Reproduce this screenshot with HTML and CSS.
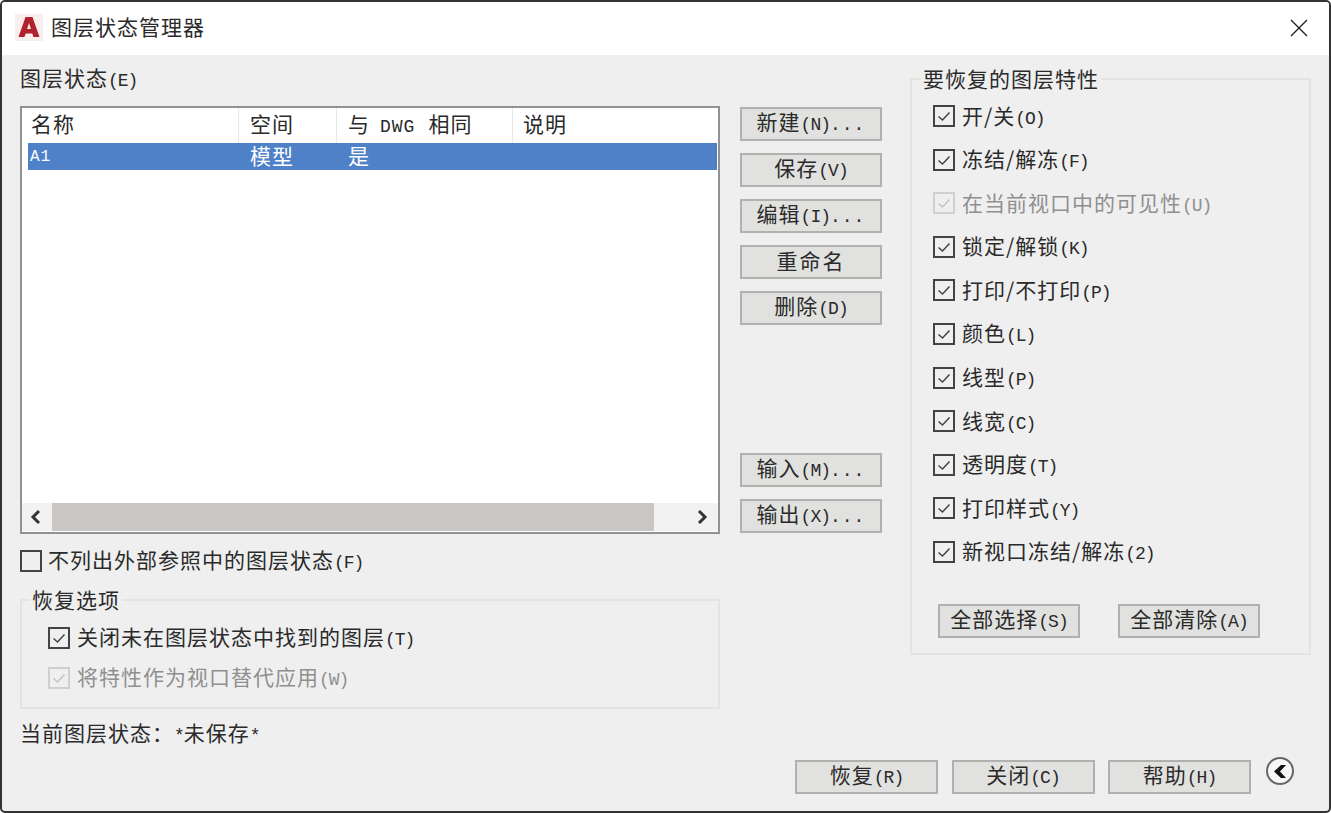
FILE: index.html
```html
<!DOCTYPE html>
<html lang="zh-CN">
<head>
<meta charset="utf-8">
<title>图层状态管理器</title>
<link rel="stylesheet" href="styles.css">
</head>
<body>
<svg class="defs" width="0" height="0" aria-hidden="true">
  <symbol id="tick" viewBox="0 0 18 18"><path d="M3.5 9.5 L7.5 13 L14.5 5.5" fill="none" stroke="currentColor" stroke-width="1.5"/></symbol>
</svg>
<div class="dialog">
  <header class="titlebar">
    <svg class="logo" width="28" height="27" viewBox="0 0 28 27">
      <rect width="28" height="27" fill="#f9eeee"/>
      <path fill-rule="evenodd" d="M10.5 3 H17.5 L24.5 23 H18.5 L17.3 19.5 H10.7 L9.5 23 H3.5 Z M14 9 L12 15 H16 Z" fill="#b0222c"/>
    </svg>
    <span class="title">图层状态管理器</span>
    <svg class="close" width="18" height="18" viewBox="0 0 18 18"><path d="M1 1 L17 17 M17 1 L1 17" stroke="#222" stroke-width="1.4" fill="none"/></svg>
  </header>

  <div class="main">
    <section class="left">
      <div class="label">图层状态<span class="key">(E)</span></div>
      <div class="listbox">
        <div class="list-head">
          <span class="hcell first">名称</span>
          <span class="hcell">空间</span>
          <span class="hcell"><span class="gapr">与</span><span class="key dwg">DWG</span><span class="gapl">相同</span></span>
          <span class="hcell last">说明</span>
        </div>
        <div class="list-row">
          <span class="name">A1</span>
          <span class="cell">模型</span>
          <span class="cell">是</span>
          <span class="cell"></span>
        </div>
        <div class="list-space"></div>
        <div class="hscroll">
          <svg class="arrow" width="13" height="16" viewBox="0 0 13 16"><path d="M10 2 L4 8 L10 14" fill="none" stroke="#333" stroke-width="3"/></svg>
          <div class="thumb"></div>
          <div></div>
          <svg class="arrow" width="13" height="16" viewBox="0 0 13 16"><path d="M3 2 L9 8 L3 14" fill="none" stroke="#333" stroke-width="3"/></svg>
        </div>
      </div>

      <div class="row xref">
        <span class="check"></span>
        <span>不列出外部参照中的图层状态<span class="key">(F)</span></span>
      </div>

      <fieldset class="group restore">
        <legend>恢复选项</legend>
        <div class="restore-list">
          <div class="row">
            <span class="check"><svg><use href="#tick"/></svg></span>
            <span>关闭未在图层状态中找到的图层<span class="key">(T)</span></span>
          </div>
          <div class="row disabled">
            <span class="check"><svg><use href="#tick"/></svg></span>
            <span>将特性作为视口替代应用<span class="key">(W)</span></span>
          </div>
        </div>
      </fieldset>

      <div class="current">当前图层状态：<span class="key">*</span>未保存<span class="key">*</span></div>
    </section>

    <section class="actions">
      <button class="btn">新建<span class="key">(N)</span><span class="dots">...</span></button>
      <button class="btn">保存<span class="key">(V)</span></button>
      <button class="btn">编辑<span class="key">(I)</span><span class="dots">...</span></button>
      <button class="btn spaced">重命名</button>
      <button class="btn">删除<span class="key">(D)</span></button>
      <button class="btn push">输入<span class="key">(M)</span><span class="dots">...</span></button>
      <button class="btn">输出<span class="key">(X)</span><span class="dots">...</span></button>
    </section>

    <fieldset class="group props">
      <legend>要恢复的图层特性</legend>
      <div class="props-list">
        <div class="row"><span class="check"><svg><use href="#tick"/></svg></span><span>开/关<span class="key">(O)</span></span></div>
        <div class="row"><span class="check"><svg><use href="#tick"/></svg></span><span>冻结/解冻<span class="key">(F)</span></span></div>
        <div class="row disabled"><span class="check"><svg><use href="#tick"/></svg></span><span>在当前视口中的可见性<span class="key">(U)</span></span></div>
        <div class="row"><span class="check"><svg><use href="#tick"/></svg></span><span>锁定/解锁<span class="key">(K)</span></span></div>
        <div class="row"><span class="check"><svg><use href="#tick"/></svg></span><span>打印/不打印<span class="key">(P)</span></span></div>
        <div class="row"><span class="check"><svg><use href="#tick"/></svg></span><span>颜色<span class="key">(L)</span></span></div>
        <div class="row"><span class="check"><svg><use href="#tick"/></svg></span><span>线型<span class="key">(P)</span></span></div>
        <div class="row"><span class="check"><svg><use href="#tick"/></svg></span><span>线宽<span class="key">(C)</span></span></div>
        <div class="row"><span class="check"><svg><use href="#tick"/></svg></span><span>透明度<span class="key">(T)</span></span></div>
        <div class="row"><span class="check"><svg><use href="#tick"/></svg></span><span>打印样式<span class="key">(Y)</span></span></div>
        <div class="row"><span class="check"><svg><use href="#tick"/></svg></span><span>新视口冻结/解冻<span class="key">(2)</span></span></div>
      </div>
      <div class="props-btns">
        <button class="btn">全部选择<span class="key">(S)</span></button>
        <button class="btn">全部清除<span class="key">(A)</span></button>
      </div>
    </fieldset>
  </div>

  <footer class="footer">
    <button class="btn">恢复<span class="key">(R)</span></button>
    <button class="btn">关闭<span class="key">(C)</span></button>
    <button class="btn">帮助<span class="key">(H)</span></button>
    <svg class="collapse" width="30" height="30" viewBox="0 0 30 30">
      <circle cx="15" cy="15" r="13" fill="#f7f7f7" stroke="#666" stroke-width="2"/>
      <path d="M21 9 H16 L9 15.5 L16 22 H21 L15 15.5 Z" fill="#111"/>
    </svg>
  </footer>
</div>
</body>
</html>
```

FILE: styles.css
```css
* { box-sizing: border-box; }

html, body {
  margin: 0;
  background: #fff;
}

body {
  width: 1331px;
  height: 813px;
  overflow: hidden;
  font-family: "Noto Sans CJK SC", "Liberation Mono", sans-serif;
  font-size: 21px;
  line-height: 24px;
  letter-spacing: 1px;
  color: #2a2a2a;
}

.defs { position: absolute; }

.dialog {
  width: 1331px;
  height: 813px;
  border: 2px solid #333;
  border-radius: 5px;
  background: #efefef;
  display: flex;
  flex-direction: column;
  overflow: hidden;
}

.titlebar {
  height: 53px;
  flex: none;
  background: #fff;
  display: flex;
  align-items: center;
  padding: 0 21px 0 13px;
}

.logo { flex: none; margin-top: -3px; }

.title {
  margin-left: 8px;
  margin-top: -6px;
  flex: 1;
}

.close { flex: none; margin-top: -1px; }

.key {
  font-family: "Liberation Mono", monospace;
  font-size: 18px;
  letter-spacing: -1px;
  line-height: 1;
}

.key.dwg { letter-spacing: 1px; }

.dots {
  font-family: "Liberation Mono", monospace;
  font-size: 18px;
  letter-spacing: 1px;
  line-height: 1;
}

.main {
  flex: none;
  height: 691px;
  display: flex;
  padding: 13px 0 0 18px;
}

.left {
  width: 700px;
  flex: none;
  display: flex;
  flex-direction: column;
}

.left > * { flex: none; }

.label { height: 24px; margin-top: -3px; margin-bottom: 3px; }

.listbox {
  margin-top: 14px;
  height: 428px;
  border: 2px solid #929292;
  background: #fff;
  display: flex;
  flex-direction: column;
}

.list-head {
  display: grid;
  grid-template-columns: 217px 98px 176px 1fr;
  height: 35px;
  flex: none;
}

.hcell {
  padding-left: 11px;
  border-right: 1px solid #e8e8e8;
  line-height: 30px;
  white-space: nowrap;
}

.hcell.first { padding-left: 9px; }
.hcell.last { border-right: 0; padding-left: 10px; }

.gapr { margin-right: 10px; }
.gapl { margin-left: 13px; }

.list-row {
  display: grid;
  grid-template-columns: 211px 98px 176px 1fr;
  height: 27px;
  flex: none;
  margin: 0 1px 0 6px;
  background: #4f81c9;
  color: #fff;
  line-height: 24px;
}

.name {
  padding-left: 2px;
  font-family: "Liberation Mono", monospace;
  font-size: 16px;
  letter-spacing: 1px;
  line-height: 28px;
}

.cell { padding-left: 11px; }

.list-space { flex: 1; }

.hscroll {
  flex: none;
  height: 28px;
  margin-bottom: 1px;
  background: #f2f2f2;
  display: grid;
  grid-template-columns: 30px 602px 1fr 28px;
  align-items: center;
  justify-items: center;
}

.arrow { margin-right: 4px; }

.thumb {
  width: 100%;
  height: 100%;
  background: #c9c6c3;
}

.row {
  display: flex;
  align-items: center;
  gap: 7px;
  height: 24px;
  white-space: nowrap;
}

.row > span:last-child { padding-bottom: 2px; }
.left .row > span:last-child { padding-bottom: 4px; }

.check {
  flex: none;
  width: 22px;
  height: 22px;
  border: 2px solid #444;
  display: block;
  color: #444;
}

.check svg {
  display: block;
  width: 18px;
  height: 18px;
}

.disabled { color: #8f8f8f; }

.disabled .check {
  border-color: #cfcfcf;
  color: #c2c2c2;
}

.xref { margin-top: 15px; gap: 6px; }

.group {
  margin: 0;
  min-width: 0;
  border: 2px solid #e3e3e3;
  padding: 0;
}

.group legend {
  padding: 0 2px;
  height: 24px;
  line-height: 22px;
}

.restore {
  margin-top: 15px;
  height: 121px;
}

.restore legend { margin-left: 8px; }

.restore-list {
  padding: 14px 0 0 26px;
  display: flex;
  flex-direction: column;
  gap: 16px;
}

.current {
  margin-top: 11px;
  height: 24px;
}

.actions {
  width: 142px;
  flex: none;
  margin-left: 20px;
  padding-top: 39px;
  display: flex;
  flex-direction: column;
  gap: 12px;
}

.btn {
  width: 142px;
  height: 34px;
  flex: none;
  padding: 0 0 5px;
  border: 2px solid #b0b0ae;
  border-radius: 0;
  background: #e1e1df;
  color: #2a2a2a;
  font: inherit;
  letter-spacing: 1px;
  text-align: center;
  white-space: nowrap;
}

.btn.spaced { letter-spacing: 2px; }
.btn.push { margin-top: 116px; }

.props {
  width: 401px;
  flex: none;
  margin-left: 28px;
  margin-top: -1px;
  height: 588px;
}

.props legend { margin-left: 9px; }

.props-list {
  padding: 13px 0 0 21px;
  display: flex;
  flex-direction: column;
  gap: 19.6px;
}

.props-btns {
  display: flex;
  gap: 38px;
  padding: 40px 0 0 26px;
}

.footer {
  flex: 1;
  display: flex;
  padding: 14px 34px 0 0;
  justify-content: flex-end;
  gap: 13.5px;
}

.footer .btn { width: 143px; }

.collapse { flex: none; margin: -4px 0 0 0.5px; }
```
